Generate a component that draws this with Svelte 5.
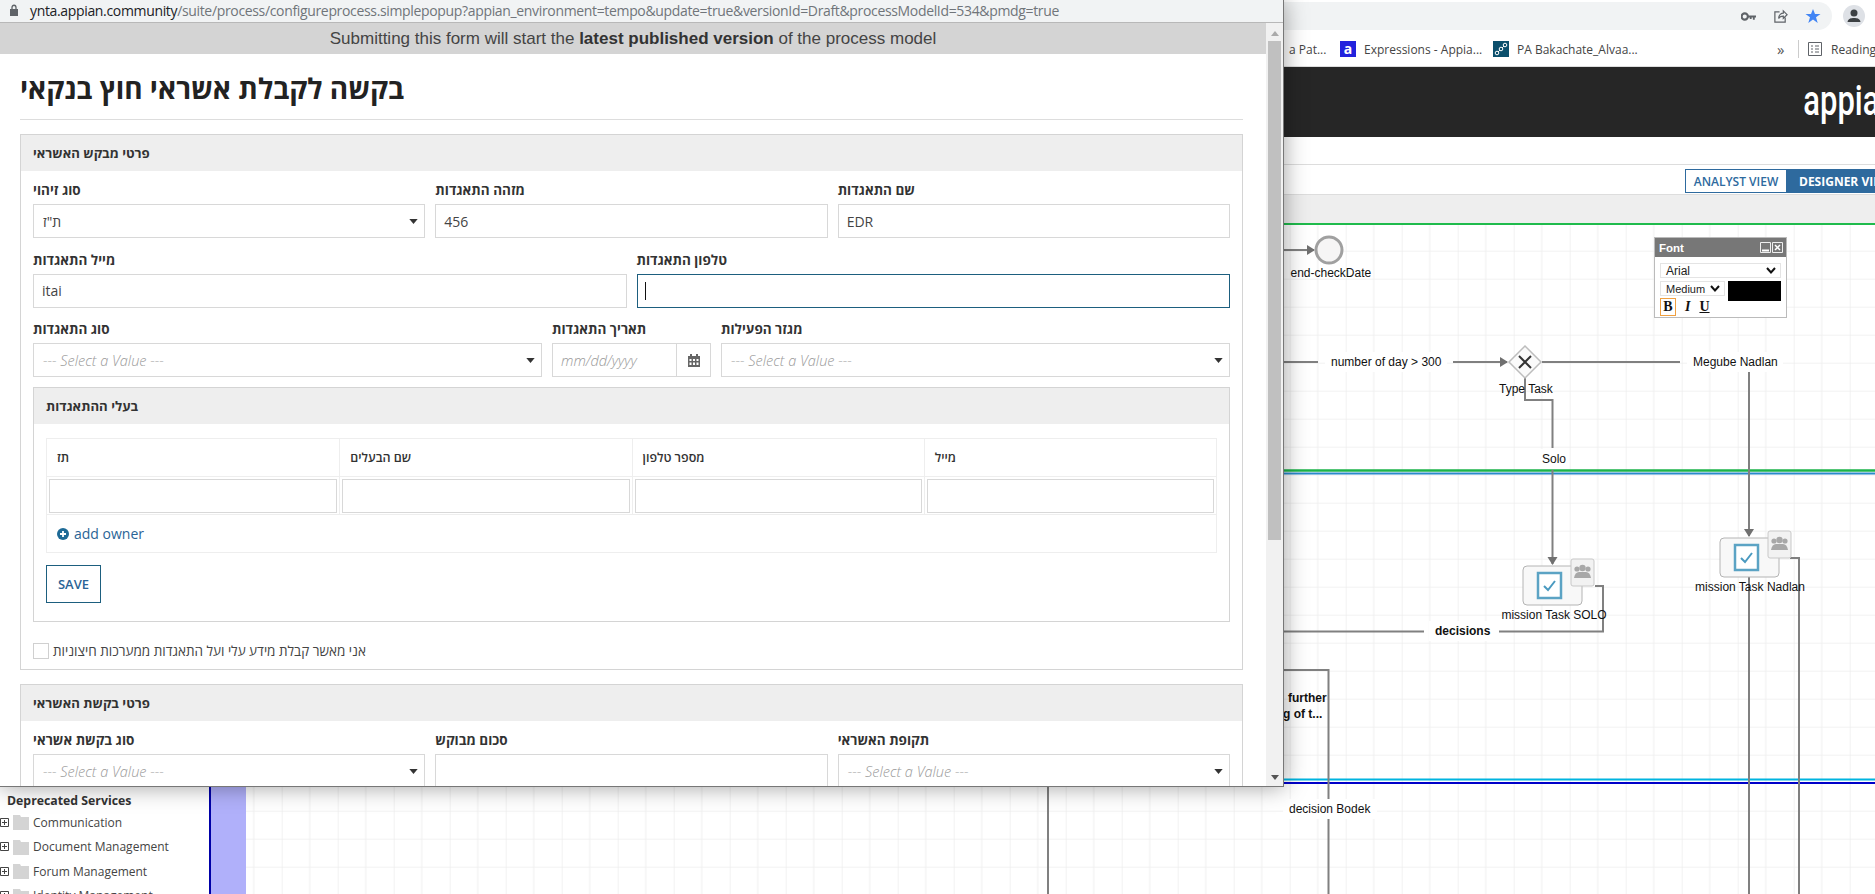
<script>
	const bookmarks = [
		{ label: 'Expressions - Appia...', kind: 'appian' },
		{ label: 'PA Bakachate_Alvaa...', kind: 'model' }
	];
	const owners = ['תז', 'שם הבעלים', 'מספר טלפון', 'מייל'];
	const tree = ['Communication', 'Document Management', 'Forum Management', 'Identity Management'];
	const url =
		'/suite/process/configureprocess.simplepopup?appian_environment=tempo&update=true&versionId=Draft&processModelId=534&pmdg=true';

	// diagram nodes, in page coordinates
	const tasks = [
		{ x: 1523, y: 566, label: 'mission Task SOLO', lx: 1554 },
		{ x: 1720, y: 538, label: 'mission Task Nadlan', lx: 1750 }
	];
	const edges = [
		'M1240 250H1314',
		'M1240 362H1318',
		'M1453 362H1507',
		'M1542 362H1680',
		'M1749 372V536',
		'M1525 378V400H1552.5V448',
		'M1552.5 470V564',
		'M1595 586H1603V631.5H1499',
		'M1424 631.5H1240',
		'M1749 577V894',
		'M1790 558H1799V894',
		'M1240 670H1328.5V894',
		'M1048 780V894'
	];
	const arrows = [
		[1315, 250, 'r'],
		[1508, 362, 'r'],
		[1749, 537, 'd'],
		[1552.5, 565, 'd']
	];
	const labels = [
		{ x: 1331, y: 366, w: 122, t: 'number of day > 300' },
		{ x: 1693, y: 366, w: 96, t: 'Megube Nadlan' },
		{ x: 1542, y: 463, w: 30, t: 'Solo' },
		{ x: 1435, y: 635, w: 66, t: 'decisions', bold: true },
		{ x: 1289, y: 813, w: 94, t: 'decision Bodek' }
	];
</script>

{#snippet caret()}
	<svg class="caret" viewBox="0 0 10 6" width="9" height="5"><path d="M0 0H10L5 6Z" /></svg>
{/snippet}

{#snippet select(value, placeholder)}
	<div class="control select">
		<span class:placeholder>{value}</span>
		{@render caret()}
	</div>
{/snippet}

{#snippet field(label, value)}
	<div class="field">
		<div class="label" lang="he">{label}</div>
		<div class="control"><span>{value}</span></div>
	</div>
{/snippet}

{#snippet selectField(label, value, placeholder)}
	<div class="field">
		<div class="label" lang="he">{label}</div>
		{@render select(value, placeholder)}
	</div>
{/snippet}

<div class="page">
	<header class="toolbar">
		<div class="omnibox">
			<svg viewBox="0 0 24 14" width="15" height="9" class="ico">
				<circle cx="6" cy="7" r="5" fill="none" stroke="#5f6368" stroke-width="3.4" />
				<path d="M11 5.4H24V8.6H22V12H19V8.6H17V11H14V8.6H11Z" fill="#5f6368" />
			</svg>
			<svg viewBox="0 0 16 16" width="15" height="15" class="ico">
				<path d="M7 3H2V14H13V9M6 10C6 6 9 4.500 11 4.500V2L15 6L11 10V7.500C9 7.500 7 8 6 10Z" fill="none" stroke="#5f6368" stroke-width="1.300" />
			</svg>
			<svg viewBox="0 0 16 16" width="16" height="16" class="ico">
				<path d="M8 1L10 6H15.500L11 9.300L12.700 15L8 11.500L3.300 15L5 9.300L.5 6H6Z" fill="#4285f4" />
			</svg>
		</div>
		<div class="avatar">
			<svg viewBox="0 0 22 22" width="22" height="22">
				<circle cx="11" cy="11" r="11" fill="#dee1e6" />
				<circle cx="11" cy="8" r="3.500" fill="#3c4043" />
				<path d="M4.500 17C5 13.500 8 13 11 13S17 13.500 17.500 17Z" fill="#3c4043" />
			</svg>
		</div>
	</header>

	<nav class="bookmarks">
		<span class="mark first">a Pat...</span>
		{#each bookmarks as b}
			<span class="mark">
				{#if b.kind === 'appian'}
					<span class="fav appian">a</span>
				{:else}
					<svg class="fav" viewBox="0 0 16 16" width="16" height="16">
						<rect width="16" height="16" fill="#0b4f6c" />
						<path d="M4 12L8 8L12 4" stroke="#fff" stroke-width="1" />
						<circle cx="4" cy="12" r="1.800" fill="#0b4f6c" stroke="#fff" />
						<circle cx="8" cy="8" r="1.800" fill="#0b4f6c" stroke="#fff" />
						<circle cx="12" cy="4" r="1.800" fill="#0b4f6c" stroke="#fff" />
					</svg>
				{/if}
				{b.label}
			</span>
		{/each}
		<span class="more">»</span>
		<span class="divider"></span>
		<svg viewBox="0 0 14 14" width="14" height="14" class="ico">
			<path d="M.5 .5H13.500V13.500H.5ZM3 4H5M7 4H11M3 7H5M7 7H11M3 10H5M7 10H11" fill="none" stroke="#5f6368" />
		</svg>
		<span class="reading">Reading list</span>
	</nav>

	<div class="appbar"><span class="logo">appian</span></div>
	<div class="tabs"></div>
	<div class="views">
		<span class="view">ANALYST VIEW</span>
		<span class="view active">DESIGNER VIEW</span>
	</div>
	<div class="band"></div>

	<main class="designer">
		<aside class="palette">
			<div class="tree-head">Deprecated Services</div>
			{#each tree as item}
				<div class="tree-row">
					<svg viewBox="0 0 9 9" width="9" height="9"><path d="M.5 .5H8.500V8.500H.5ZM2 4.500H7M4.500 2V7" fill="#fff" stroke="#444" /></svg>
					<svg viewBox="0 0 16 16" width="16" height="16"><path d="M0 1H7L8 3H16V16H0Z" fill="#d4d4d4" /></svg>
					<span>{item}</span>
				</div>
			{/each}
		</aside>
		<div class="lane"></div>
		<svg class="canvas" viewBox="246 225 1629 669">
			<defs>
				<pattern id="grid" patternUnits="userSpaceOnUse" x="1.700" y="26.700" width="56" height="28">
					<path d="M0 0V28M0 0H56" stroke="#e6e6e6" fill="none" />
					<path d="M28 0V28" stroke="#eeeeee" fill="none" />
				</pattern>
			</defs>
			<rect x="246" y="225" width="1629" height="669" fill="#fff" />
			<rect x="246" y="225" width="1629" height="669" fill="url(#grid)" />

			<path d="M246 470.500H1875" stroke="#1cb34a" stroke-width="2.500" />
			<path d="M246 473.500H1875" stroke="#2a8acb" stroke-width="2" />
			<path d="M246 779.500H1875" stroke="#00b4e0" stroke-width="2" />
			<path d="M246 783H1875" stroke="#0000c8" stroke-width="2" />

			{#each edges as d}
				<path {d} fill="none" stroke="#808080" stroke-width="2" />
			{/each}
			{#each arrows as [x, y, dir]}
				<path
					d={dir === 'r' ? `M${x} ${y}l-8 -5v10z` : `M${x} ${y}l-5 -8h10z`}
					fill="#707070"
				/>
			{/each}

			<circle cx="1329" cy="250" r="13" fill="#f6f5f5" stroke="#a0a0a0" stroke-width="3" />
			<text class="node" x="1290.500" y="277">end-checkDate</text>

			<path d="M1525 346L1541 362L1525 378L1509 362Z" fill="#fafafa" stroke="#bdbdbd" stroke-width="1.500" />
			<path d="M1519 356L1531 368M1531 356L1519 368" stroke="#333" stroke-width="2" />
			<text class="node" x="1499" y="393">Type Task</text>

			{#each labels as l}
				<rect x={l.x - 6} y={l.y - 14} width={l.w} height="20" fill="#fff" />
				<text class="node" class:strong={l.bold} x={l.x} y={l.y}>{l.t}</text>
			{/each}

			{#each tasks as t}
				<rect x={t.x} y={t.y} width="59" height="39" rx="4" fill="#f8f8f8" stroke="#b4b4b4" />
				<rect x={t.x + 15} y={t.y + 7} width="23" height="25" fill="#fff" stroke="#5ba3c4" stroke-width="2.500" />
				<path d={`M${t.x + 21} ${t.y + 20}l4 4l7 -9`} fill="none" stroke="#4a9ac0" stroke-width="2" />
				<rect x={t.x + 48} y={t.y - 7} width="23" height="27" rx="2" fill="#f2f2f2" stroke="#c8c8c8" />
				<g fill="#a8a8a8">
					<circle cx={t.x + 59.500} cy={t.y + 2} r="3.200" />
					<circle cx={t.x + 54} cy={t.y + 3} r="2.600" />
					<circle cx={t.x + 65} cy={t.y + 3} r="2.600" />
					<path d={`M${t.x + 51} ${t.y + 12}q1 -6 5 -6h7q4 0 5 6z`} />
				</g>
				<text class="node" text-anchor="middle" x={t.lx} y={t.y + 53}>{t.label}</text>
			{/each}

			<text class="node strong" x="1288" y="702">further</text>
			<text class="node strong" x="1283" y="718">g of t...</text>
		</svg>

		<div class="font-panel">
			<div class="fp-head">
				<span>Font</span>
				<span class="fp-btns">
					<svg viewBox="0 0 11 11" width="11" height="11"><path d="M.5 .5H10.500V10.500H.5Z" fill="#777" stroke="#eee" /><path d="M2 8.500H9" stroke="#fff" stroke-width="2" /></svg>
					<svg viewBox="0 0 11 11" width="11" height="11"><path d="M.5 .5H10.500V10.500H.5Z" fill="#777" stroke="#eee" /><path d="M3 3L8 8M8 3L3 8" stroke="#fff" stroke-width="1.500" /></svg>
				</span>
			</div>
			<div class="fp-body">
				<div class="fp-select wide"><span>Arial</span><svg viewBox="0 0 10 7" width="10" height="7"><path d="M1 1L5 5.500L9 1" fill="none" stroke="#111" stroke-width="2" /></svg></div>
				<div class="fp-row">
					<div class="fp-left">
						<div class="fp-select"><span>Medium</span><svg viewBox="0 0 10 7" width="10" height="7"><path d="M1 1L5 5.500L9 1" fill="none" stroke="#111" stroke-width="2" /></svg></div>
						<div class="fp-styles">
							<span class="fp-b">B</span>
							<span class="fp-i">I</span>
							<span class="fp-u">U</span>
						</div>
					</div>
					<div class="fp-color"></div>
				</div>
			</div>
		</div>
	</main>

	<section class="popup">
		<div class="urlbar">
			<svg viewBox="0 0 10 12" width="10" height="12"><path d="M1 5H9V12H1Z" fill="#5f6368" /><path d="M3 5V3.500C3 .5 7 .5 7 3.500V5" fill="none" stroke="#5f6368" stroke-width="1.300" /></svg>
			<span class="url"><b>ynta.appian.community</b>{url}</span>
		</div>
		<div class="popup-body">
			<div class="content">
				<div class="banner">Submitting this form will start the <b>latest published version</b> of the process model</div>
				<div class="form">
					<h1 lang="he">בקשה לקבלת אשראי חוץ בנקאי</h1>

					<div class="box">
						<h2 lang="he">פרטי מבקש האשראי</h2>
						<div class="box-body">
							<div class="row cols3">
								{@render selectField('סוג זיהוי', 'ת"ז', false)}
								{@render field('מזהה התאגדות', '456')}
								{@render field('שם התאגדות', 'EDR')}
							</div>
							<div class="row cols2">
								{@render field('מייל התאגדות', 'itai')}
								<div class="field">
									<div class="label" lang="he">טלפון התאגדות</div>
									<div class="control focused"><span class="cursor"></span></div>
								</div>
							</div>
							<div class="row cols-date">
								{@render selectField('סוג התאגדות', '--- Select a Value ---', true)}
								<div class="field">
									<div class="label" lang="he">תאריך התאגדות</div>
									<div class="control date">
										<span class="placeholder">mm/dd/yyyy</span>
										<span class="cal">
											<svg viewBox="0 0 12 13" width="12" height="13">
												<path fill="#666" fill-rule="evenodd" d="M0 2H2V0H4V2H8V0H10V2H12V13H0ZM1.500 5V7H3.500V5ZM5 5V7H7V5ZM8.500 5V7H10.500V5ZM1.500 8.500V11H3.500V8.500ZM5 8.500V11H7V8.500ZM8.500 8.500V11H10.500V8.500Z" />
											</svg>
										</span>
									</div>
								</div>
								{@render selectField('מגזר הפעילות', '--- Select a Value ---', true)}
							</div>

							<div class="box inner">
								<h2 lang="he">בעלי ההתאגדות</h2>
								<div class="box-body owners">
									<div class="grid">
										<div class="grid-row head">
											{#each owners as col}
												<div class="cell" lang="he">{col}</div>
											{/each}
										</div>
										<div class="grid-row inputs">
											{#each owners as col}
												<div class="cell"><div class="control"></div></div>
											{/each}
										</div>
										<div class="add">
											<svg viewBox="0 0 12 12" width="12" height="12">
												<circle cx="6" cy="6" r="6" fill="#1d6a96" />
												<path d="M6 3V9M3 6H9" stroke="#fff" stroke-width="1.800" />
											</svg>
											add owner
										</div>
									</div>
									<button class="save">SAVE</button>
								</div>
							</div>

							<div class="consent">
								<span class="check"></span>
								<span lang="he">אני מאשר קבלת מידע עלי ועל התאגדות ממערכות חיצוניות</span>
							</div>
						</div>
					</div>

					<div class="box second">
						<h2 lang="he">פרטי בקשת האשראי</h2>
						<div class="box-body">
							<div class="row cols3">
								{@render selectField('סוג בקשת אשראי', '--- Select a Value ---', true)}
								{@render field('סכום מבוקש', '')}
								{@render selectField('תקופת האשראי', '--- Select a Value ---', true)}
							</div>
						</div>
					</div>
				</div>
			</div>
			<div class="scrollbar">
				<svg viewBox="0 0 8 5" width="8" height="5" class="up"><path d="M0 5H8L4 0Z" fill="#aaa" /></svg>
				<div class="thumb"></div>
				<svg viewBox="0 0 8 5" width="8" height="5" class="down"><path d="M0 0H8L4 5Z" fill="#555" /></svg>
			</div>
		</div>
	</section>
</div>

<style>
	:global(body) {
		margin: 0;
		background: #fff;
	}
	.page {
		position: relative;
		width: 1875px;
		height: 894px;
		overflow: hidden;
		display: flex;
		flex-direction: column;
		font-family: 'Open Sans', 'Noto Sans', sans-serif;
		color: #333;
	}

	/* browser chrome behind the popup */
	.toolbar {
		height: 32px;
		flex: none;
		display: flex;
		align-items: center;
		background: #fff;
	}
	.omnibox {
		flex: 1;
		height: 28px;
		margin: 0 43px 0 0;
		background: #f1f3f4;
		border-radius: 0 14px 14px 0;
		display: flex;
		align-items: center;
		justify-content: flex-end;
		gap: 17px;
		padding-right: 11px;
	}
	.avatar {
		position: absolute;
		left: 1843px;
		top: 5px;
		line-height: 0;
	}
	.bookmarks {
		height: 35px;
		flex: none;
		box-sizing: border-box;
		display: flex;
		align-items: center;
		padding-left: 1289px;
		border-bottom: 1px solid #ddd;
		font-size: 12px;
		color: #444;
		white-space: nowrap;
		background: #fff;
	}
	.mark {
		display: flex;
		align-items: center;
		gap: 8px;
		flex: none;
		width: 153px;
	}
	.mark.first {
		width: 51px;
	}
	.fav {
		width: 16px;
		height: 16px;
		flex: none;
	}
	.fav.appian {
		background: #2222dd;
		color: #fff;
		font-weight: 700;
		font-size: 14px;
		line-height: 15px;
		text-align: center;
	}
	.more {
		margin-left: 131px;
		flex: none;
		font-size: 15px;
		color: #555;
		width: 14px;
	}
	.divider {
		width: 1px;
		height: 18px;
		flex: none;
		background: #ccc;
		margin: 0 9px 0 7px;
	}
	.ico {
		flex: none;
	}
	.reading {
		margin-left: 9px;
		flex: none;
	}

	.appbar {
		height: 70px;
		flex: none;
		background: #262626;
		display: flex;
		align-items: center;
		justify-content: flex-end;
		overflow: hidden;
	}
	.logo {
		color: #fff;
		font-family: 'Roboto', sans-serif;
		font-weight: 500;
		font-size: 43px;
		line-height: 1;
		margin-right: -22px;
		transform: scaleX(0.72);
		transform-origin: right center;
		padding-bottom: 4px;
	}
	.tabs {
		height: 28px;
		flex: none;
		box-sizing: border-box;
		border-bottom: 1px solid #ddd;
	}
	.views {
		height: 30px;
		flex: none;
		box-sizing: border-box;
		padding: 4px 0 1px 1685px;
		display: flex;
		border-bottom: 1px solid #ddd;
		white-space: nowrap;
	}
	.view {
		flex: none;
		box-sizing: border-box;
		font-size: 12px;
		font-weight: 600;
		color: #2e6a9e;
		border: 1px solid #2e6a9e;
		width: 102px;
		display: flex;
		align-items: center;
		justify-content: center;
	}
	.view.active {
		background: #2e6a9e;
		color: #fff;
		padding-left: 11px;
		justify-content: flex-start;
		width: 120px;
		font-weight: 700;
	}
	.band {
		height: 30px;
		flex: none;
		background: #eeeeee;
		border-bottom: 2px solid #1fbb4c;
		box-sizing: border-box;
	}

	.designer {
		flex: 1;
		min-height: 0;
		display: flex;
		position: relative;
	}
	.palette {
		width: 209px;
		flex: none;
		background: #fff;
		box-sizing: border-box;
		padding-top: 567px;
		font-size: 12px;
		color: #444;
		white-space: nowrap;
	}
	.tree-head {
		font-weight: 700;
		font-size: 12.300px;
		padding-left: 7px;
		height: 18px;
		line-height: 18px;
		color: #333;
	}
	.tree-row {
		height: 24.500px;
		display: flex;
		align-items: center;
		gap: 4px;
	}
	.lane {
		width: 35px;
		flex: none;
		background: #b0b0fa;
		border-left: 2px solid #0000a8;
	}
	.canvas {
		flex: 1;
		min-width: 0;
		height: 100%;
		display: block;
	}
	.node {
		font-family: 'Liberation Sans', Arial, sans-serif;
		font-size: 12px;
		fill: #111;
	}
	.node.strong {
		font-weight: 700;
	}

	.font-panel {
		position: absolute;
		left: 1654px;
		top: 12px;
		width: 133px;
		height: 81px;
		box-sizing: border-box;
		border: 1px solid #bbb;
		background: #fff;
		font-family: 'Liberation Sans', Arial, sans-serif;
	}
	.fp-head {
		height: 19px;
		background: #777;
		color: #fff;
		font-weight: 700;
		font-size: 11.500px;
		padding: 0 3px 0 4px;
		display: flex;
		align-items: center;
		justify-content: space-between;
	}
	.fp-btns {
		display: flex;
		gap: 1px;
		line-height: 0;
	}
	.fp-body {
		padding: 6px 5px 0;
		display: flex;
		flex-direction: column;
		gap: 3px;
		font-size: 11px;
	}
	.fp-select {
		height: 15px;
		width: 65px;
		box-sizing: border-box;
		border: 1px solid #e4e4e4;
		display: flex;
		align-items: center;
		justify-content: space-between;
		padding: 0 4px 0 5px;
		color: #222;
	}
	.fp-select.wide {
		width: 121px;
		font-size: 12px;
	}
	.fp-row {
		display: flex;
		justify-content: space-between;
		width: 121px;
	}
	.fp-color {
		width: 53px;
		height: 20px;
		background: #000;
	}
	.fp-styles {
		display: flex;
		align-items: center;
		gap: 9px;
		margin-top: 2px;
		font-family: 'Liberation Serif', serif;
		font-weight: 700;
		font-size: 14px;
		color: #111;
	}
	.fp-b {
		border: 1px solid #f0a040;
		width: 14px;
		height: 16px;
		line-height: 16px;
		text-align: center;
	}
	.fp-i {
		font-style: italic;
	}
	.fp-u {
		text-decoration: underline;
	}

	/* popup window */
	.popup {
		position: absolute;
		left: 0;
		top: 0;
		width: 1284px;
		height: 787px;
		background: #fff;
		display: flex;
		flex-direction: column;
		border-right: 1px solid #777;
		border-bottom: 1px solid #777;
		box-sizing: border-box;
		box-shadow: 0 0 22px rgba(0, 0, 0, 0.38);
	}
	.urlbar {
		height: 23px;
		flex: none;
		box-sizing: border-box;
		background: #f1f3f4;
		border-bottom: 1px solid #b8b8b8;
		display: flex;
		align-items: center;
		gap: 11px;
		padding: 0 0 2px 9px;
		white-space: nowrap;
		font-size: 14px;
		color: #70757a;
		font-family: 'Open Sans', sans-serif;
	}
	.url {
		letter-spacing: -0.340px;
	}
	.url b {
		font-weight: 400;
		color: #202124;
	}
	.popup-body {
		flex: 1;
		min-height: 0;
		display: flex;
	}
	.content {
		width: 1266px;
		flex: none;
		overflow: hidden;
	}
	.banner {
		height: 31px;
		background: #d4d4d4;
		text-align: center;
		font-family: 'Liberation Sans', Arial, sans-serif;
		font-size: 17px;
		line-height: 31px;
		color: #444;
	}
	.banner b {
		color: #333;
	}
	.form {
		padding: 0 23px 0 20px;
	}
	h1 {
		margin: 0;
		height: 66px;
		box-sizing: border-box;
		padding-top: 16px;
		border-bottom: 1px solid #ddd;
		font-size: 28px;
		line-height: 36px;
		font-weight: 700;
		color: #222;
	}
	.box {
		margin-top: 14px;
		border: 1px solid #d4d4d4;
		background: #fff;
	}
	.box.second {
		margin-top: 14px;
	}
	h2 {
		margin: 0;
		height: 36px;
		background: #eee;
		padding-left: 12px;
		font-size: 13.200px;
		line-height: 36px;
		font-weight: 700;
		color: #333;
	}
	.box-body {
		padding: 9px 12px 9px;
	}
	.row {
		display: grid;
		gap: 10px;
		margin-bottom: 11.500px;
	}
	.cols3 {
		grid-template-columns: repeat(3, 1fr);
	}
	.cols2 {
		grid-template-columns: 1fr 1fr;
	}
	.cols-date {
		grid-template-columns: 1fr 159px 1fr;
		margin-bottom: 10px;
	}
	.label {
		height: 20px;
		margin-bottom: 4px;
		font-size: 13.500px;
		line-height: 20px;
		font-weight: 700;
		color: #333;
	}
	.control {
		height: 34px;
		box-sizing: border-box;
		border: 1px solid #d8d8d8;
		background: #fff;
		display: flex;
		align-items: center;
		padding-left: 8px;
		font-size: 14px;
		color: #444;
	}
	.select {
		justify-content: space-between;
		padding-right: 6px;
		padding-left: 9px;
	}
	.caret {
		fill: #333;
		flex: none;
	}
	.placeholder {
		font-style: italic;
		font-weight: 300;
		font-size: 14.500px;
		color: #999;
	}
	.focused {
		border-color: #1d5f7f;
	}
	.cursor {
		width: 1px;
		height: 18px;
		background: #111;
		margin-left: -1px;
	}
	.date {
		padding-right: 0;
		justify-content: space-between;
		white-space: nowrap;
		overflow: hidden;
	}
	.cal {
		width: 33px;
		height: 100%;
		flex: none;
		border-left: 1px solid #d8d8d8;
		display: flex;
		align-items: center;
		justify-content: center;
		background: #fff;
	}
	.inner {
		margin-top: 0;
	}
	.owners {
		padding: 14px 12px 18px;
	}
	.grid {
		border: 1px solid #eeeeee;
	}
	.grid-row {
		display: grid;
		grid-template-columns: repeat(4, 1fr);
		border-bottom: 1px solid #eeeeee;
	}
	.head {
		height: 37px;
		font-size: 12.500px;
		font-weight: 600;
		color: #333;
	}
	.head .cell {
		display: flex;
		align-items: center;
		padding-left: 10px;
	}
	.cell + .cell {
		border-left: 1px solid #eeeeee;
	}
	.inputs {
		height: 38px;
		box-sizing: border-box;
	}
	.inputs .cell {
		padding: 2px;
	}
	.add {
		height: 37px;
		display: flex;
		align-items: center;
		gap: 5px;
		padding-left: 10px;
		font-size: 14px;
		color: #2a6496;
	}
	.save {
		display: block;
		margin-top: 12px;
		width: 55px;
		height: 38px;
		padding: 0;
		background: #fff;
		border: 1px solid #1d5f7f;
		font-family: inherit;
		font-size: 13px;
		font-weight: 600;
		color: #2a6496;
	}
	.consent {
		margin-top: 20px;
		display: flex;
		align-items: center;
		gap: 4px;
		font-size: 13.500px;
		color: #444;
	}
	.check {
		width: 16px;
		height: 16px;
		box-sizing: border-box;
		border: 1px solid #d0d0d0;
		flex: none;
	}
	.scrollbar {
		width: 17px;
		flex: none;
		background: #f1f1f1;
		display: flex;
		flex-direction: column;
		align-items: center;
	}
	.up {
		margin-top: 8px;
	}
	.thumb {
		width: 13px;
		height: 499px;
		margin-top: 5px;
		background: #c0c0c0;
	}
	.down {
		margin-top: auto;
		margin-bottom: 6px;
	}
</style>
